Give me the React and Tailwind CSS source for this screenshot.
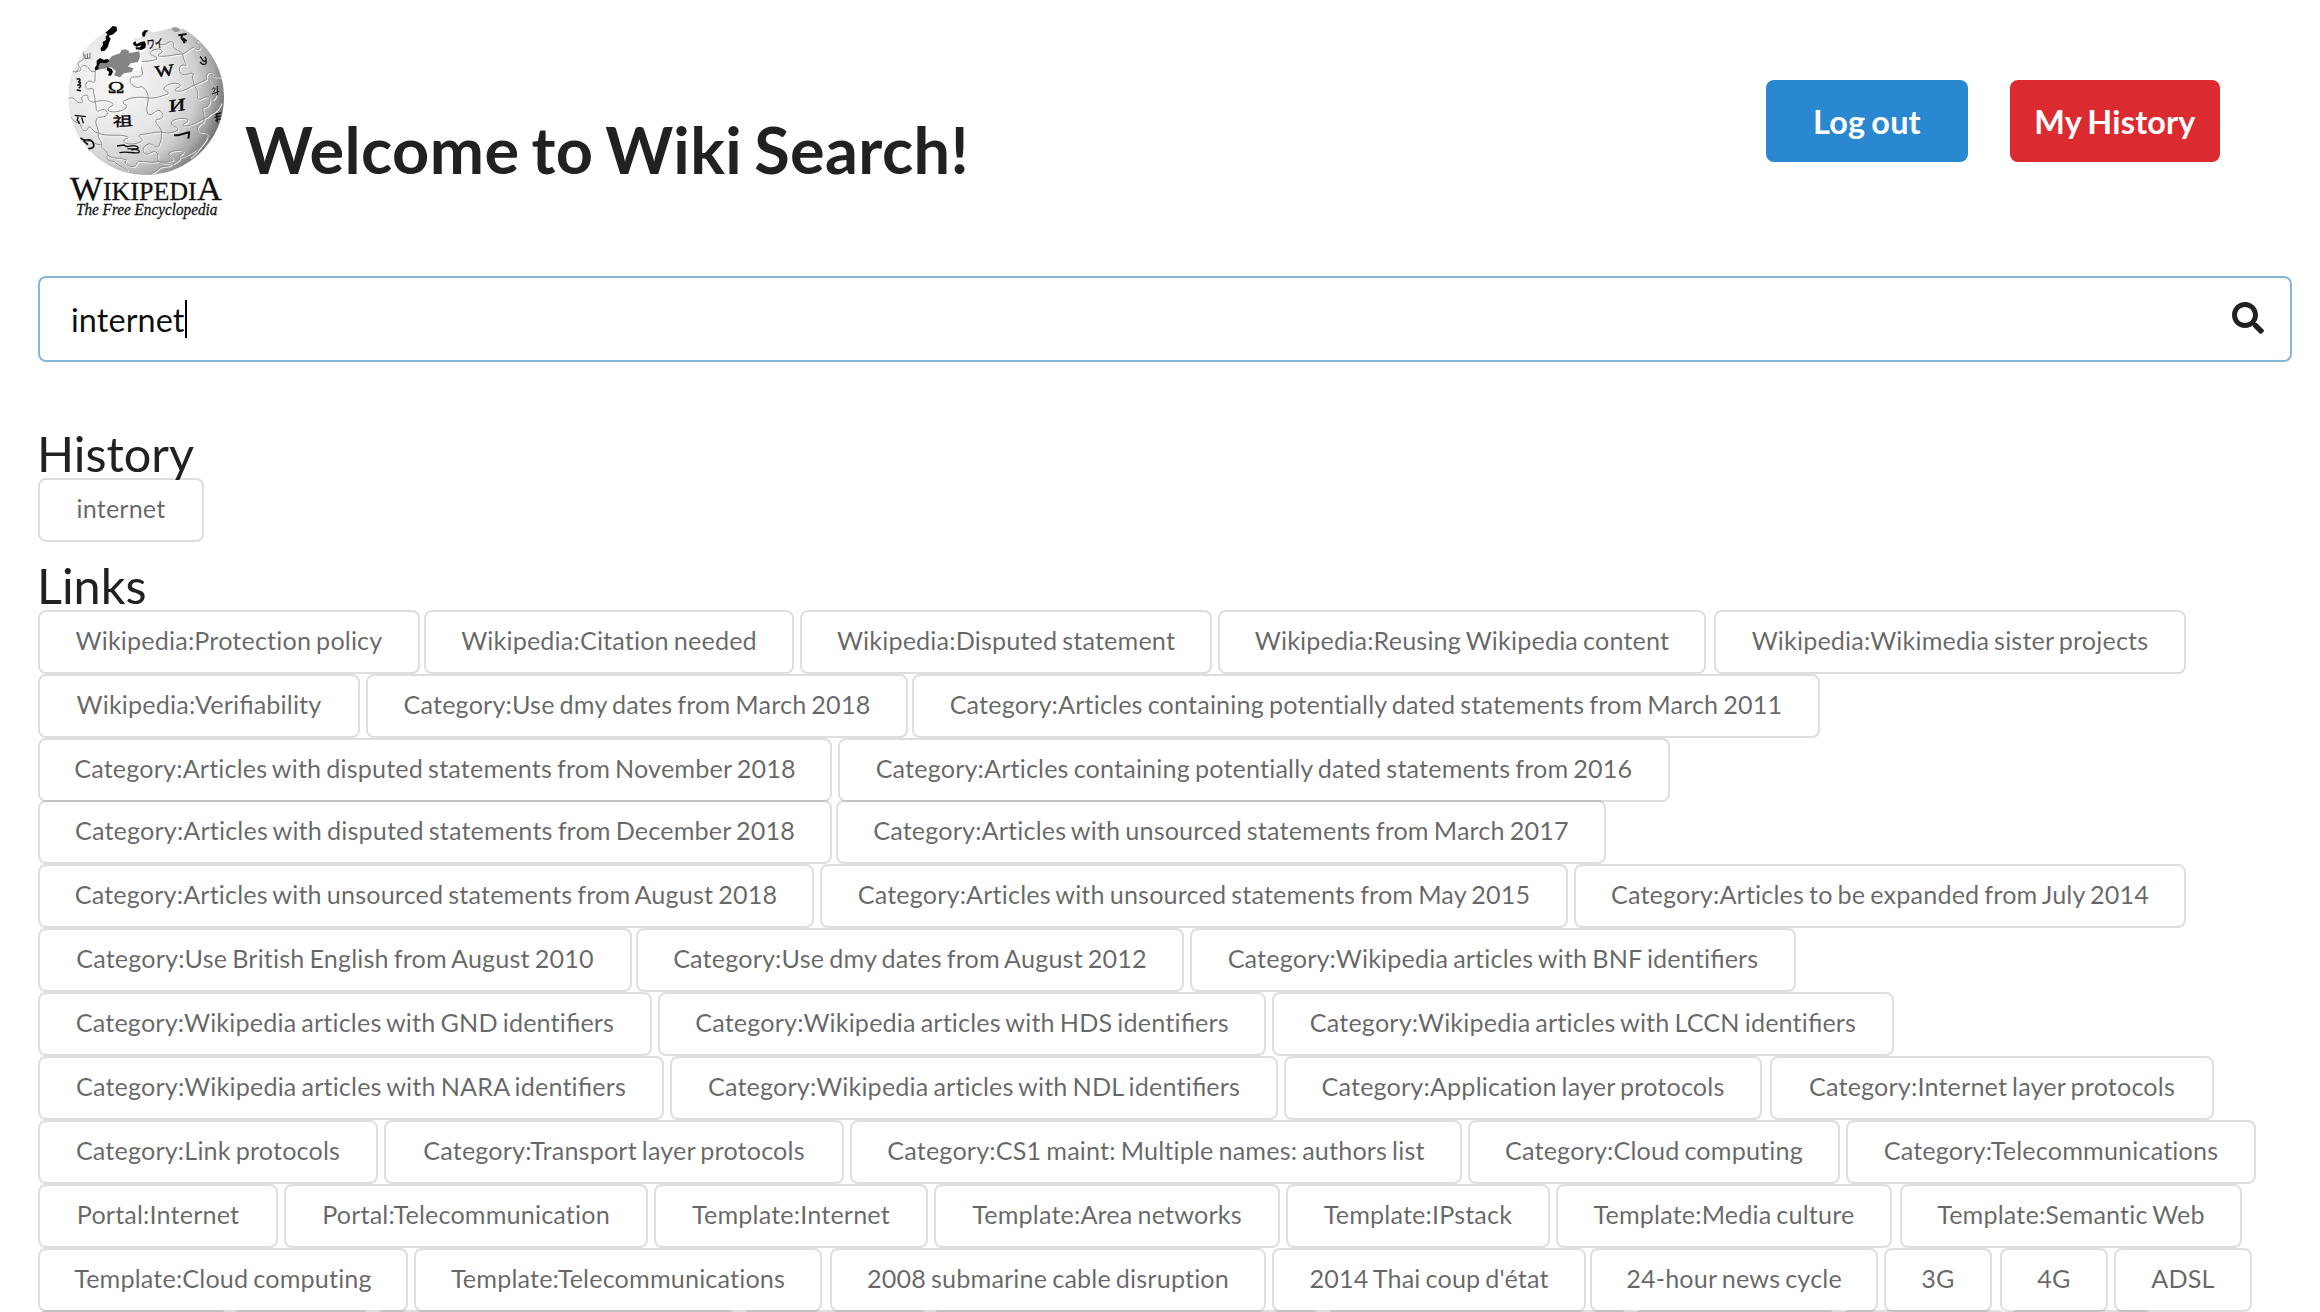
import { Fragment } from "react";
import { FaSearch } from "react-icons/fa";

// Each row lists its buttons as [label, left edge, right edge].
const ROWS = [
  [["Wikipedia:Protection policy", 38, 420], ["Wikipedia:Citation needed", 424, 794], ["Wikipedia:Disputed statement", 800, 1212], ["Wikipedia:Reusing Wikipedia content", 1218, 1706], ["Wikipedia:Wikimedia sister projects", 1714, 2186]],
  [["Wikipedia:Verifiability", 38, 360], ["Category:Use dmy dates from March 2018", 366, 908], ["Category:Articles containing potentially dated statements from March 2011", 912, 1820]],
  [["Category:Articles with disputed statements from November 2018", 38, 832], ["Category:Articles containing potentially dated statements from 2016", 838, 1670]],
  [["Category:Articles with disputed statements from December 2018", 38, 832], ["Category:Articles with unsourced statements from March 2017", 836, 1606]],
  [["Category:Articles with unsourced statements from August 2018", 38, 814], ["Category:Articles with unsourced statements from May 2015", 820, 1568], ["Category:Articles to be expanded from July 2014", 1574, 2186]],
  [["Category:Use British English from August 2010", 38, 632], ["Category:Use dmy dates from August 2012", 636, 1184], ["Category:Wikipedia articles with BNF identifiers", 1190, 1796]],
  [["Category:Wikipedia articles with GND identifiers", 38, 652], ["Category:Wikipedia articles with HDS identifiers", 658, 1266], ["Category:Wikipedia articles with LCCN identifiers", 1272, 1894]],
  [["Category:Wikipedia articles with NARA identifiers", 38, 664], ["Category:Wikipedia articles with NDL identifiers", 670, 1278], ["Category:Application layer protocols", 1284, 1762], ["Category:Internet layer protocols", 1770, 2214]],
  [["Category:Link protocols", 38, 378], ["Category:Transport layer protocols", 384, 844], ["Category:CS1 maint: Multiple names: authors list", 850, 1462], ["Category:Cloud computing", 1468, 1840], ["Category:Telecommunications", 1846, 2256]],
  [["Portal:Internet", 38, 278], ["Portal:Telecommunication", 284, 648], ["Template:Internet", 654, 928], ["Template:Area networks", 934, 1280], ["Template:IPstack", 1286, 1550], ["Template:Media culture", 1556, 1892], ["Template:Semantic Web", 1900, 2242]],
  [["Template:Cloud computing", 38, 408], ["Template:Telecommunications", 414, 822], ["2008 submarine cable disruption", 830, 1266], ["2014 Thai coup d'état", 1272, 1586], ["24-hour news cycle", 1590, 1878], ["3G", 1884, 1992], ["4G", 2000, 2108], ["ADSL", 2114, 2252]],
  [["", 38, 228], ["", 232, 370], ["", 376, 736], ["", 742, 928], ["", 932, 1320], ["", 1326, 1628], ["", 1634, 1836], ["", 1842, 2006], ["", 2010, 2152]],
];

// Letter spacing turns ligatures off, so "fi" is set without it.
function Label({ text }) {
  return text.split("fi").map((part, i) => (
    <Fragment key={i}>
      {i > 0 && <span className="tracking-normal">fi</span>}
      {part}
    </Fragment>
  ));
}

function Chip({ label, width, gap }) {
  return (
    <button
      className="h-16 shrink-0 rounded-[8px] border-2 border-[rgba(34,36,38,0.15)] pb-0.5 text-center text-[25.2px] leading-none tracking-[0.15px] whitespace-nowrap text-black/60 [word-spacing:-1.6px]"
      style={{ width, marginLeft: gap }}
    >
      <Label text={label} />
    </button>
  );
}

const SEAMS = [
  "M265 240 C264 222 255 210 243 206 C232 214 206 200 211 184 C216 168 240 186 248 168 C248 150 235 140 238 108",
  "M265 240 C235 234 205 240 190 250 C186 262 206 258 198 270 C186 282 150 286 144 276 C142 264 166 266 158 256 C142 246 125 246 105 252",
  "M265 240 C264 262 256 272 264 288 C282 296 282 274 300 278 C318 290 306 306 290 304 C280 314 302 325 305 342",
  "M265 240 C288 242 305 234 324 228 C330 218 308 222 312 210 C322 196 350 192 360 200 C366 210 342 208 346 218 C362 226 385 210 402 202",
  "M402 202 C402 186 394 182 400 168 C392 160 376 178 362 166 C352 150 362 138 374 142 C386 148 370 128 368 108",
  "M240 130 C258 132 276 128 290 124 C294 112 270 116 270 104 C278 92 302 90 306 98 C308 108 292 106 296 114 C320 118 345 108 368 108",
  "M368 108 C360 96 345 98 340 86 C346 70 330 66 318 78 C304 84 290 76 284 70",
  "M368 108 C384 102 394 88 402 88 C406 98 424 98 420 84 C404 76 410 62 425 72 C436 80 446 92 458 106",
  "M402 202 C418 196 430 190 440 184 C436 168 448 158 456 166 C456 180 468 176 488 178",
  "M402 202 C412 214 416 226 412 240 C420 254 432 230 446 238 C456 252 444 270 430 268 C424 278 436 290 432 302",
  "M446 184 C452 200 466 202 462 216 C474 226 466 246 456 244",
  "M305 342 C322 348 338 344 352 338 C360 326 330 326 334 312 C344 300 376 298 384 306 C384 318 362 316 370 324 C392 326 412 312 432 302",
  "M305 342 C282 342 262 348 240 350 C228 358 254 360 244 370 C226 382 196 380 192 370 C190 358 212 364 202 356 C176 346 142 358 115 345",
  "M105 252 C112 268 104 278 116 280 C124 270 144 274 142 288 C136 302 118 294 112 300 C100 316 116 328 115 345",
  "M305 342 C306 360 302 372 296 386 C284 390 278 374 264 378 C248 386 244 402 256 408 C270 412 276 396 288 402 C300 410 288 418 296 430",
  "M432 302 C436 318 418 314 412 330 C412 346 430 342 440 346 C448 358 432 372 422 386",
  "M432 302 C448 298 452 284 464 282 C474 276 480 262 484 254",
  "M296 430 C316 436 328 430 338 428 C346 418 320 416 328 404 C344 396 366 394 370 402 C370 412 352 412 360 418 C382 416 402 400 422 386",
  "M296 430 C278 436 254 430 236 430 C226 436 232 446 216 446 C196 442 190 434 200 426 C180 418 160 424 144 412",
  "M115 345 C112 362 124 366 126 380 C120 392 142 396 144 412",
  "M115 345 C102 344 98 334 90 326 C80 326 86 342 72 338 C60 330 66 318 54 314 C44 312 38 306 32 296",
  "M105 252 C92 254 82 246 84 234 C74 228 62 236 66 246 C74 256 56 258 48 248 C42 240 34 238 26 242",
  "M105 252 C108 232 96 226 102 216 C96 206 84 220 78 208 C74 194 86 184 98 192 C108 198 104 182 106 160",
  "M106 160 C96 164 88 158 86 150 C76 138 64 142 62 152 C64 164 48 158 38 162",
  "M72 100 C66 112 78 118 68 126 C56 132 50 138 58 146 C56 154 50 158 46 166",
  "M126 380 C108 384 98 366 88 370 C78 376 68 364 60 358",
  "M144 412 C134 420 148 432 162 430 C170 440 192 450 204 458",
  "M296 430 C306 440 330 432 334 440 C326 448 304 442 296 452 C290 460 280 464 270 470",
  "M360 418 C360 428 346 432 340 438 M422 386 C414 400 402 408 390 420",
];

function Logo() {
  return (
    <svg viewBox="0 0 660 660" className="h-[220px] w-[220px] shrink-0" aria-label="Wikipedia">
      <defs>
        <radialGradient id="ball" gradientUnits="userSpaceOnUse" cx="225" cy="215" r="350">
          <stop offset="0" stopColor="#f8f8f8" />
          <stop offset="0.45" stopColor="#e8e8e8" />
          <stop offset="0.7" stopColor="#cfcfcf" />
          <stop offset="0.85" stopColor="#a6a6a6" />
          <stop offset="1" stopColor="#626262" />
        </radialGradient>
        <clipPath id="shell">
          <path d="M222 50 L205 62 C130 102 85 175 85 262 C85 390 190 495 318 495 C447 495 552 390 552 262 C552 180 510 110 445 66 C430 56 424 52 418 62 C405 72 395 62 396 54 C375 58 350 68 335 66 L326 62 L312 64 L312 76 L298 84 L280 84 L282 98 L304 92 L318 106 L316 118 L298 132 L306 158 L300 180 C285 185 262 184 258 200 L232 200 L213 190 L217 176 L206 168 L168 180 L180 148 L190 126 L184 110 L198 96 L202 82 L214 70 L228 60 Z" />
        </clipPath>
      </defs>
      <g clipPath="url(#shell)">
        <rect x="80" y="40" width="480" height="460" fill="url(#ball)" />
        <g fill="none" stroke="#fff" strokeWidth="3.5" opacity="0.8" transform="translate(62.5 26.5)">
          {SEAMS.map((d) => <path key={d} d={d} />)}
        </g>
        <g fill="none" stroke="#8c8c8c" strokeWidth="3" transform="translate(60 24)">
          {SEAMS.map((d) => <path key={d} d={d} />)}
        </g>
      </g>
      <path d="M176 152 L206 150 L216 138 L240 130 L244 120 L256 118 L268 124 L266 130 L298 124 L300 140 L294 156 L272 160 L264 170 L280 174 L276 186 L252 190 L240 202 L222 196 L228 184 L214 172 L190 176 L170 180 Z" fill="#858585" />
      <g fill="#050505">
        <path d="M196 68 L208 58 L218 48 L230 50 L231 62 L220 73 L206 77 L212 86 L207 98 L204 110 L194 122 L183 124 L182 114 L189 104 L188 96 L198 90 L197 80 L203 72 Z" />
        <path d="M170 152 L180 144 L190 149 L204 147 L208 154 L198 160 L182 158 L176 166 L175 178 L166 182 L164 174 L170 166 Z" />
        <path d="M202 172 L216 178 L219 186 L212 198 L204 196 L208 186 L200 180 Z" />
        <path d="M279 98 L286 94 L290 102 L302 96 L314 94 L318 104 L316 114 L304 120 L288 118 L286 112 L300 112 L304 106 L290 110 L281 106 Z" />
        <path d="M306 70 L313 61 L326 61 L318 68 L314 80 L308 80 Z" />
      </g>
      <path d="M395 56 C400 48 422 52 420 62 C412 70 398 66 395 56Z" fill="#999" />
      <g fill="#080808" className="font-['Liberation_Serif','Noto_Sans_CJK_SC',serif]" textAnchor="middle">
        <text x="228" y="249" fontSize="47" stroke="#080808" textLength="50" lengthAdjust="spacingAndGlyphs">Ω</text>
        <text transform="translate(375 198) rotate(-7)" fontSize="49" stroke="#080808" strokeWidth="1.5" textLength="58" lengthAdjust="spacingAndGlyphs">W</text>
        <text transform="translate(411 303) rotate(-7) skewX(-8)" fontSize="52" stroke="#080808" strokeWidth="1.5" textLength="50" lengthAdjust="spacingAndGlyphs">И</text>
        <text x="248" y="348" fontSize="40" stroke="#080808" textLength="60" lengthAdjust="spacingAndGlyphs" transform="rotate(-3 248 333)">祖</text>
        <text transform="translate(346 114) rotate(-5)" fontSize="36" stroke="#080808" textLength="48" lengthAdjust="spacingAndGlyphs">ワイ</text>
      </g>
      <g fill="none" stroke="#101010" strokeWidth="5">
        <path d="M402 376 L414 376 L450 366 M448 366 L445 386" strokeWidth="6" />
        <path d="M415 76 L440 72 M426 76 C420 90 430 82 434 100 M428 84 L440 94" strokeWidth="6" />
        <path d="M480 140 C490 146 482 152 494 154 C502 152 498 144 494 140 M480 156 C490 168 502 164 498 152" strokeWidth="4" />
        <path d="M231 408 L252 405 C262 418 275 400 292 410 C300 416 290 418 262 416 M238 428 C265 422 275 432 296 428 C304 420 286 416 274 420" strokeWidth="4" />
        <path d="M110 208 C120 204 124 210 114 216 C124 214 124 222 112 226 C122 222 126 228 116 234 M110 240 L123 242" strokeWidth="4.5" />
        <path d="M104 316 L138 320 M112 320 C120 326 104 330 116 334 L118 342 M125 322 L130 340" strokeWidth="4" />
        <path d="M122 384 C135 400 145 380 158 396 C166 410 160 416 145 416 M130 392 L144 404" strokeWidth="5" />
        <path d="M516 238 C524 228 530 238 520 246 M516 252 L538 244 M532 228 L532 256" strokeWidth="3" />
        <path d="M526 314 L544 308 M524 322 L542 318 M526 332 L542 326 M530 310 L532 338" strokeWidth="4" />
        <path d="M134 132 L136 146 M142 130 L143 146 M150 128 L150 144 M134 146 L152 144" strokeWidth="2.5" stroke="#555" />
      </g>
      <g fill="#111" stroke="#111" strokeWidth="0.8" className="font-['Liberation_Serif',serif]">
        <text x="90" y="570" fontSize="98" textLength="456" lengthAdjust="spacingAndGlyphs">W<tspan fontSize="73">IKIPEDI</tspan>A</text>
        <text x="108" y="615" fontSize="47" fontStyle="italic" textLength="424" lengthAdjust="spacingAndGlyphs">The Free Encyclopedia</text>
      </g>
    </svg>
  );
}

export default function App() {
  return (
    <main className="h-[1312px] w-[2320px] overflow-hidden bg-white font-['Lato',sans-serif] text-[#212121]">
      <header className="flex h-[276px] items-start pt-[10px] pl-10">
        <Logo />
        <h1 className="mt-[99px] -ml-[15px] text-[64.8px] leading-[80px] font-bold tracking-[0.4px] whitespace-nowrap [word-spacing:-4px]">Welcome to Wiki Search!</h1>
        <div className="mt-[70px] mr-[100px] ml-auto flex gap-[42px] text-[32.4px] font-bold text-white">
          <button className="h-[82px] w-[202px] rounded-[8px] bg-[#2988cf] pt-0.5 tracking-[0.2px] [word-spacing:-2px]">Log out</button>
          <button className="h-[82px] w-[210px] rounded-[8px] bg-[#db2a30] pt-0.5 tracking-[0.2px] [word-spacing:-2px]">My History</button>
        </div>
      </header>
      <div className="mx-[38px] flex h-[86px] w-[2254px] items-center rounded-[8px] border-2 border-[#85b7d9] pr-[26px] pl-[31px] text-[32.4px] text-black/95">
        <span className="mt-0.5 tracking-[0.1px]">internet</span>
        <span className="h-[38px] w-0.5 bg-black" />
        <FaSearch className="mb-[3px] ml-auto size-8 text-[#212121]" />
      </div>
      <section className="pl-[38px]">
        <h2 className="mt-[60px] -ml-px h-14 text-[48.6px] leading-[62px]">History</h2>
        <Chip label="internet" width={166} gap={0} />
      </section>
      <section className="pl-[38px]">
        <h2 className="mt-3 -ml-px h-14 text-[48.6px] leading-[62px]">Links</h2>
        {ROWS.map((row, i) => (
          <div key={i} className={i === 3 || i === 11 ? "-mt-0.5 flex" : "flex"}>
            {row.map(([label, left, right], j) => (
              <Chip key={j} label={label} width={right - left} gap={j ? left - row[j - 1][2] : 0} />
            ))}
          </div>
        ))}
      </section>
    </main>
  );
}
